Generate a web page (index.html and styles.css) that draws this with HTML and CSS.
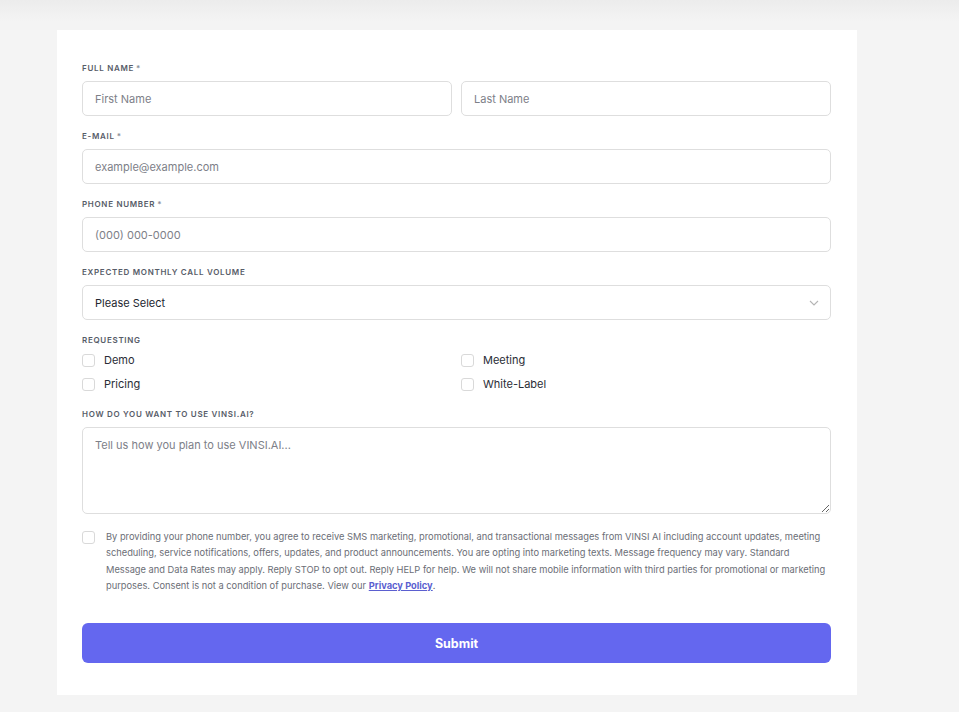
FILE: index.html
```html
<!DOCTYPE html>
<html lang="en">
<head>
    <meta charset="UTF-8">
    <meta name="viewport" content="width=device-width, initial-scale=1.0">
    <title>Contact VINSI.AI</title>
    <link rel="stylesheet" href="styles.css">
</head>
<body>
    <div class="page">
        <form class="form-card" onsubmit="return false">
            <div class="field">
                <label class="field-label">Full Name<span class="req">*</span></label>
                <div class="two-cols">
                    <input type="text" placeholder="First Name">
                    <input type="text" placeholder="Last Name">
                </div>
            </div>

            <div class="field">
                <label class="field-label">E-mail<span class="req">*</span></label>
                <input type="email" placeholder="example@example.com">
            </div>

            <div class="field">
                <label class="field-label">Phone Number<span class="req">*</span></label>
                <input type="tel" placeholder="(000) 000-0000">
            </div>

            <div class="field">
                <label class="field-label">Expected Monthly Call Volume</label>
                <div class="select-wrap">
                    <select>
                        <option>Please Select</option>
                        <option>Under 1,000</option>
                        <option>1,000 - 10,000</option>
                        <option>10,000+</option>
                    </select>
                    <svg class="chevron" width="10" height="6" viewBox="0 0 10 6"><path d="M1 1l4 4 4-4" fill="none" stroke="#b5b5b5" stroke-width="1.1"/></svg>
                </div>
            </div>

            <div class="field field-checks">
                <label class="field-label">Requesting</label>
                <div class="two-cols checks">
                    <label class="check"><input type="checkbox"><span>Demo</span></label>
                    <label class="check"><input type="checkbox"><span>Meeting</span></label>
                    <label class="check"><input type="checkbox"><span>Pricing</span></label>
                    <label class="check"><input type="checkbox"><span>White-Label</span></label>
                </div>
            </div>

            <div class="field">
                <label class="field-label">How do you want to use VINSI.AI?</label>
                <textarea placeholder="Tell us how you plan to use VINSI.AI..."></textarea>
            </div>

            <label class="consent">
                <input type="checkbox">
                <span>By providing your phone number, you agree to receive SMS marketing, promotional, and transactional messages from VINSI AI including account updates, meeting scheduling, service notifications, offers, updates, and product announcements. You are opting into marketing texts. Message frequency may vary. Standard Message and Data Rates may apply. Reply STOP to opt out. Reply HELP for help. We will not share mobile information with third parties for promotional or marketing purposes. Consent is not a condition of purchase. View our <a href="#">Privacy Policy</a>.</span>
            </label>

            <button type="submit" class="submit-btn">Submit</button>
        </form>
    </div>
</body>
</html>
```

FILE: styles.css
```css
/* General */
body {
    margin: 0;
    font-family: Inter, "Noto Sans", Arial, sans-serif;
    background: linear-gradient(#ececec, #f4f4f4 22px) #f4f4f4;
    color: #1f2430;
}

.page {
    padding: 30px 0 17px 57px;
}

.form-card {
    width: 800px;
    box-sizing: border-box;
    background-color: #fff;
    padding: 32px 26px 32px 25px;
}

/* Fields */
.field {
    margin-bottom: 14px;
}

.field-label {
    display: block;
    font-size: 8px;
    line-height: 13px;
    font-weight: 600;
    letter-spacing: 0.7px;
    text-transform: uppercase;
    color: #575c68;
    margin-bottom: 6px;
}

.req {
    margin-left: 2px;
    color: #8a8f99;
}

.two-cols {
    display: grid;
    grid-template-columns: 1fr 1fr;
    gap: 9px;
}

input[type="text"],
input[type="email"],
input[type="tel"],
select,
textarea {
    display: block;
    width: 100%;
    box-sizing: border-box;
    height: 35px;
    padding: 0 12px;
    border: 1px solid #dedede;
    border-radius: 5px;
    font-family: inherit;
    font-size: 11px;
    color: #1f2430;
    background-color: #fff;
    outline: none;
}

::placeholder {
    color: #7d8088;
}

.select-wrap {
    position: relative;
}

select {
    appearance: none;
    -webkit-appearance: none;
    color: #23262f;
}

.chevron {
    position: absolute;
    right: 12px;
    top: 15px;
    pointer-events: none;
}

textarea {
    height: 87px;
    padding: 10px 12px;
    resize: vertical;
}

/* Checkboxes */
.field-checks {
    margin-bottom: 12px;
}

.field-checks .field-label {
    margin-bottom: 1px;
}

.checks {
    row-gap: 0;
}

.check {
    display: flex;
    align-items: center;
    height: 24px;
    font-size: 11px;
    color: #2a2d36;
}

input[type="checkbox"] {
    appearance: none;
    -webkit-appearance: none;
    width: 13px;
    height: 13px;
    margin: 0 9px 0 0;
    border: 1px solid #d9d9d9;
    border-radius: 3px;
    background-color: #fff;
    flex: none;
}

/* Consent */
.consent {
    display: flex;
    align-items: flex-start;
    margin-top: 15px;
    font-size: 9.3px;
    line-height: 16.3px;
    color: #6b6e76;
}

.consent input[type="checkbox"] {
    margin: 2px 11px 0 0;
}

.consent a {
    color: #5b5fd0;
    font-weight: 700;
}

.submit-btn {
    display: block;
    width: 100%;
    height: 40px;
    margin-top: 29px;
    border: none;
    border-radius: 6px;
    background-color: #6467ef;
    color: #fff;
    font-family: inherit;
    font-size: 12.5px;
    font-weight: 700;
    cursor: pointer;
}
```
